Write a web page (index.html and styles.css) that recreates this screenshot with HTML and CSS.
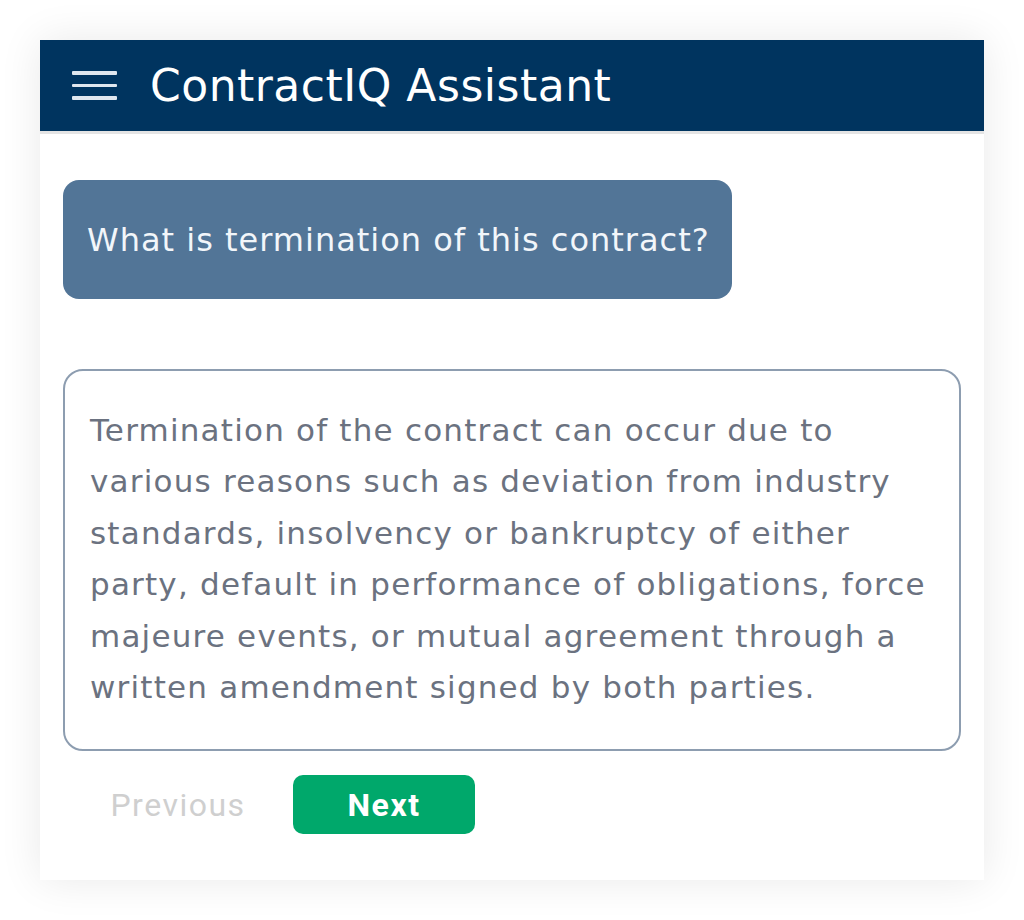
FILE: index.html
```html
<!DOCTYPE html>
<html lang="en">
<head>
<meta charset="utf-8">
<title>ContractIQ Assistant</title>
<link rel="stylesheet" href="styles.css">
</head>
<body>
<div class="card">
  <header class="topbar">
    <span class="menu" aria-hidden="true"><i></i><i></i><i></i></span>
    <h1 class="title">ContractIQ Assistant</h1>
  </header>
  <main class="content">
    <div class="question">What is termination of this contract?</div>
    <div class="answer">Termination of the contract can occur due to<br>various reasons such as deviation from industry<br>standards, insolvency or bankruptcy of either<br>party, default in performance of obligations, force<br>majeure events, or mutual agreement through a<br>written amendment signed by both parties.</div>
    <div class="nav">
      <button class="btn btn-prev" disabled>Previous</button>
      <button class="btn btn-next">Next</button>
    </div>
  </main>
</div>
</body>
</html>
```

FILE: styles.css
```css
html, body {
  margin: 0;
  padding: 0;
  background: #ffffff;
}
body {
  padding: 40px;
  font-family: "DejaVu Sans", "Liberation Sans", sans-serif;
}
.card {
  width: 944px;
  height: 840px;
  background: #ffffff;
  box-shadow: 0 0 40px rgba(0, 0, 0, 0.09);
  display: flex;
  flex-direction: column;
}
.topbar {
  height: 91px;
  background: #00345f;
  display: flex;
  align-items: center;
  padding-left: 32px;
  box-shadow: 0 3px 0 #e4e4e4;
  position: relative;
  z-index: 1;
}
.menu {
  width: 45px;
  display: flex;
  flex-direction: column;
  gap: 9px;
  margin-right: 33px;
}
.menu i {
  display: block;
  height: 3.5px;
  background: #dfe7ef;
  border-radius: 1px;
}
.title {
  margin: 0;
  color: #ffffff;
  font-size: 44px;
  font-weight: 400;
  letter-spacing: 0.5px;
}
.content {
  padding: 49px 23px 0 23px;
  display: flex;
  flex-direction: column;
}
.question {
  align-self: flex-start;
  width: 669px;
  height: 119px;
  box-sizing: border-box;
  background: #527597;
  border-radius: 16px;
  color: #f2f6fa;
  font-size: 32px;
  letter-spacing: 1px;
  display: flex;
  align-items: center;
  padding-left: 24px;
}
.answer {
  margin-top: 70px;
  height: 382px;
  box-sizing: border-box;
  border: 2px solid #8d9db0;
  border-radius: 20px;
  padding: 34px 24px 0 25px;
  color: #6b7280;
  font-size: 31px;
  letter-spacing: 1.2px;
  line-height: 51.4px;
}
.nav {
  margin-top: 24px;
  margin-left: 24px;
  display: flex;
  gap: 24px;
}
.btn {
  width: 182px;
  height: 59px;
  border: none;
  border-radius: 10px;
  font-family: "Roboto", "Liberation Sans", sans-serif;
  font-size: 32px;
  letter-spacing: 1.5px;
  padding: 0;
  cursor: pointer;
}
.btn-prev {
  background: transparent;
  color: #cfcfcf;
}
.btn-next {
  background: #00a86b;
  color: #ffffff;
  font-weight: 700;
}
```
